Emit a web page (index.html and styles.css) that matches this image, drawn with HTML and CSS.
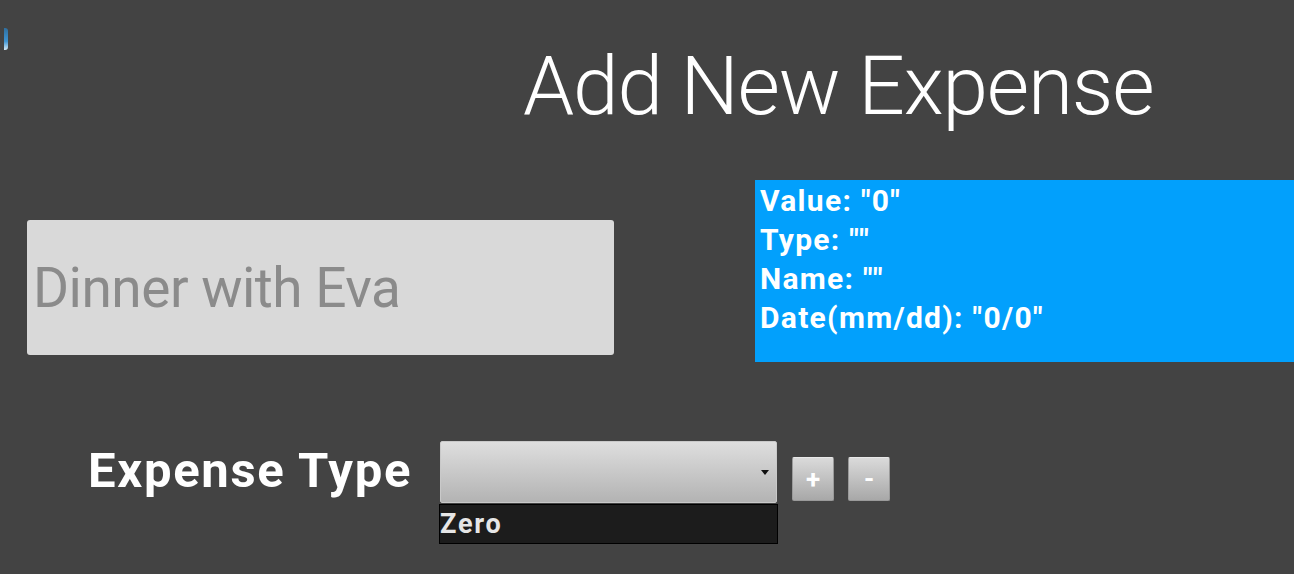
FILE: index.html
```html
<!DOCTYPE html>
<html lang="en">
<head>
<meta charset="utf-8">
<title>Add New Expense</title>
<link rel="stylesheet" href="styles.css">
</head>
<body>
<div class="page">
  <header class="header">
    <span class="back-sliver"></span>
    <h1 class="title">Add New Expense</h1>
  </header>
  <section class="middle">
    <input class="name-input" type="text" placeholder="Dinner with Eva">
    <div class="summary">
      <div class="summary-line">Value: "0"</div>
      <div class="summary-line">Type: ""</div>
      <div class="summary-line">Name: ""</div>
      <div class="summary-line">Date(mm/dd): "0/0"</div>
    </div>
  </section>
  <section class="type-row">
    <div class="type-label">Expense Type</div>
    <div class="select-col">
      <div class="select-box">
        <svg class="select-arrow" width="8" height="5" viewBox="0 0 8 5"><path d="M0 0 L8 0 L4 5 Z" fill="#111"/></svg>
      </div>
      <div class="select-list">
        <div class="select-option">Zero</div>
      </div>
    </div>
    <button class="small-btn btn-plus">+</button>
    <button class="small-btn btn-minus">-</button>
  </section>
</div>
</body>
</html>
```
FILE: styles.css
```css
* { box-sizing: border-box; }
html, body {
  margin: 0;
  padding: 0;
  background: #434343;
  font-family: Roboto, "Noto Sans", "Liberation Sans", sans-serif;
  overflow: hidden;
}
.page {
  width: 1294px;
  height: 574px;
  display: flex;
  flex-direction: column;
}
.header {
  display: flex;
  align-items: flex-start;
  height: 136px;
}
.back-sliver {
  width: 4px;
  height: 22px;
  margin-left: 4px;
  margin-top: 28px;
  border-radius: 0 3px 3px 0;
  background: linear-gradient(#2f6f9f, #3e94d2 60%, #d6ebf7);
}
.title {
  margin: 45px 0 0 515px;
  font-weight: 300;
  font-size: 82px;
  line-height: 82px;
  letter-spacing: -1.2px;
  color: #ffffff;
}
.middle {
  display: flex;
  align-items: flex-start;
  margin-top: 44px;
}
.name-input {
  margin: 40px 0 0 27px;
  width: 587px;
  height: 135px;
  border: none;
  border-radius: 3px;
  background: #d9d9d9;
  padding: 0 0 0 6px;
  font-family: Roboto, "Noto Sans", sans-serif;
  font-size: 55px;
  letter-spacing: -0.5px;
  color: #666;
  outline: none;
}
.name-input::placeholder { color: #8b8b8b; }
.summary {
  margin-left: 141px;
  flex: 1;
  height: 182px;
  background: #02a0fc;
  padding: 1px 0 0 5px;
}
.summary-line {
  font-weight: 700;
  font-size: 30px;
  line-height: 39px;
  letter-spacing: 1.3px;
  color: #ffffff;
}
.type-row {
  display: flex;
  align-items: flex-start;
  margin-top: 79px;
  padding-left: 88px;
}
.type-label {
  margin-top: 5px;
  width: 351px;
  font-weight: 700;
  font-size: 49px;
  line-height: 49px;
  letter-spacing: 1.7px;
  color: #ffffff;
  white-space: nowrap;
}
.select-col {
  display: flex;
  flex-direction: column;
  width: 339px;
}
.select-box {
  margin-left: 1px;
  width: 337px;
  height: 62px;
  border: 1px solid #c9c9c9;
  border-radius: 2px;
  background: linear-gradient(#dedede, #b3b3b3);
  display: flex;
  align-items: center;
  justify-content: flex-end;
  padding-right: 7px;
}
.select-arrow { margin-top: 1px; }
.select-list {
  margin-top: 1px;
  height: 40px;
  background: #1c1c1c;
  border: 1px solid #000;
}
.select-option {
  font-weight: 700;
  font-size: 27px;
  line-height: 38px;
  letter-spacing: 1.8px;
  color: #e6e6e6;
}
.small-btn {
  margin-top: 16px;
  width: 42px;
  height: 44px;
  padding: 0;
  border: 1px solid #9a9a9a;
  border-top-color: #e8e8e8;
  border-radius: 2px;
  background: linear-gradient(#dadada, #a8a8a8);
  color: #ffffff;
  font-family: Roboto, "Noto Sans", sans-serif;
  font-weight: 700;
  font-size: 26px;
  line-height: 42px;
}
.btn-plus { margin-left: 14px; }
.btn-minus { margin-left: 14px; }
```
